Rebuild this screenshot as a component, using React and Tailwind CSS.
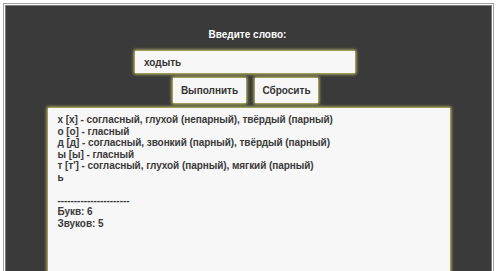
import React, { useState } from 'react'

const lines = [
    'х [х] - согласный, глухой (непарный), твёрдый (парный)',
    'о [о] - гласный',
    'д [д] - согласный, звонкий (парный), твёрдый (парный)',
    'ы [ы] - гласный',
    'т [т\'] - согласный, глухой (парный), мягкий (парный)',
    'ь',
    '',
    '----------------------',
    'Букв: 6',
    'Звуков: 5',
]

const App = () => {
    const [word, setWord] = useState('ходыть')

    return (
        <div className='h-[271px] w-[500px] overflow-hidden bg-white pt-[3px] pl-[3px] pr-[6px] font-["Liberation_Sans",Arial,sans-serif]'>
            <div className='h-[300px] border border-[#a0a0a0] bg-white p-[1px]'>
                <div className='h-full border border-[#7a7a7a] bg-[#3a3a3a] flex flex-col items-center pt-[23px]'>
                    <h2 className='text-[10px] font-bold text-white leading-[12px] mr-[2px]'>Введите слово:</h2>
                    <input
                        type='text'
                        value={word}
                        onChange={(e) => setWord(e.target.value)}
                        className='mt-[10px] mr-[7px] w-[220px] h-[23px] bg-[#f7f7f7] px-[9px] text-[10px] font-bold text-[#333] outline-none shadow-[0_0_3px_1px_#d8d870]'
                    />
                    <div className='flex gap-[9px] mt-[5px] mr-[6px]'>
                        <button className='h-[25px] w-[73px] bg-[#f7f7f7] text-[10px] font-bold text-[#333] shadow-[0_0_3px_1px_#d8d870]'>Выполнить</button>
                        <button className='h-[25px] w-[63px] bg-[#f7f7f7] text-[10px] font-bold text-[#333] shadow-[0_0_3px_1px_#d8d870]'>Сбросить</button>
                    </div>
                    <div className='mt-[5px] w-[402px] h-[200px] bg-[#f7f7f7] px-[10px] pt-[6px] text-[10px] tracking-[-0.06px] font-bold text-[#3a3a3a] leading-[11.5px] shadow-[0_0_3px_1px_#d8d870]'>
                        {lines.map((l, i) => (
                            <div key={i} className='h-[11.5px] whitespace-pre'>{l}</div>
                        ))}
                    </div>
                </div>
            </div>
        </div>
    )
}

export default App
